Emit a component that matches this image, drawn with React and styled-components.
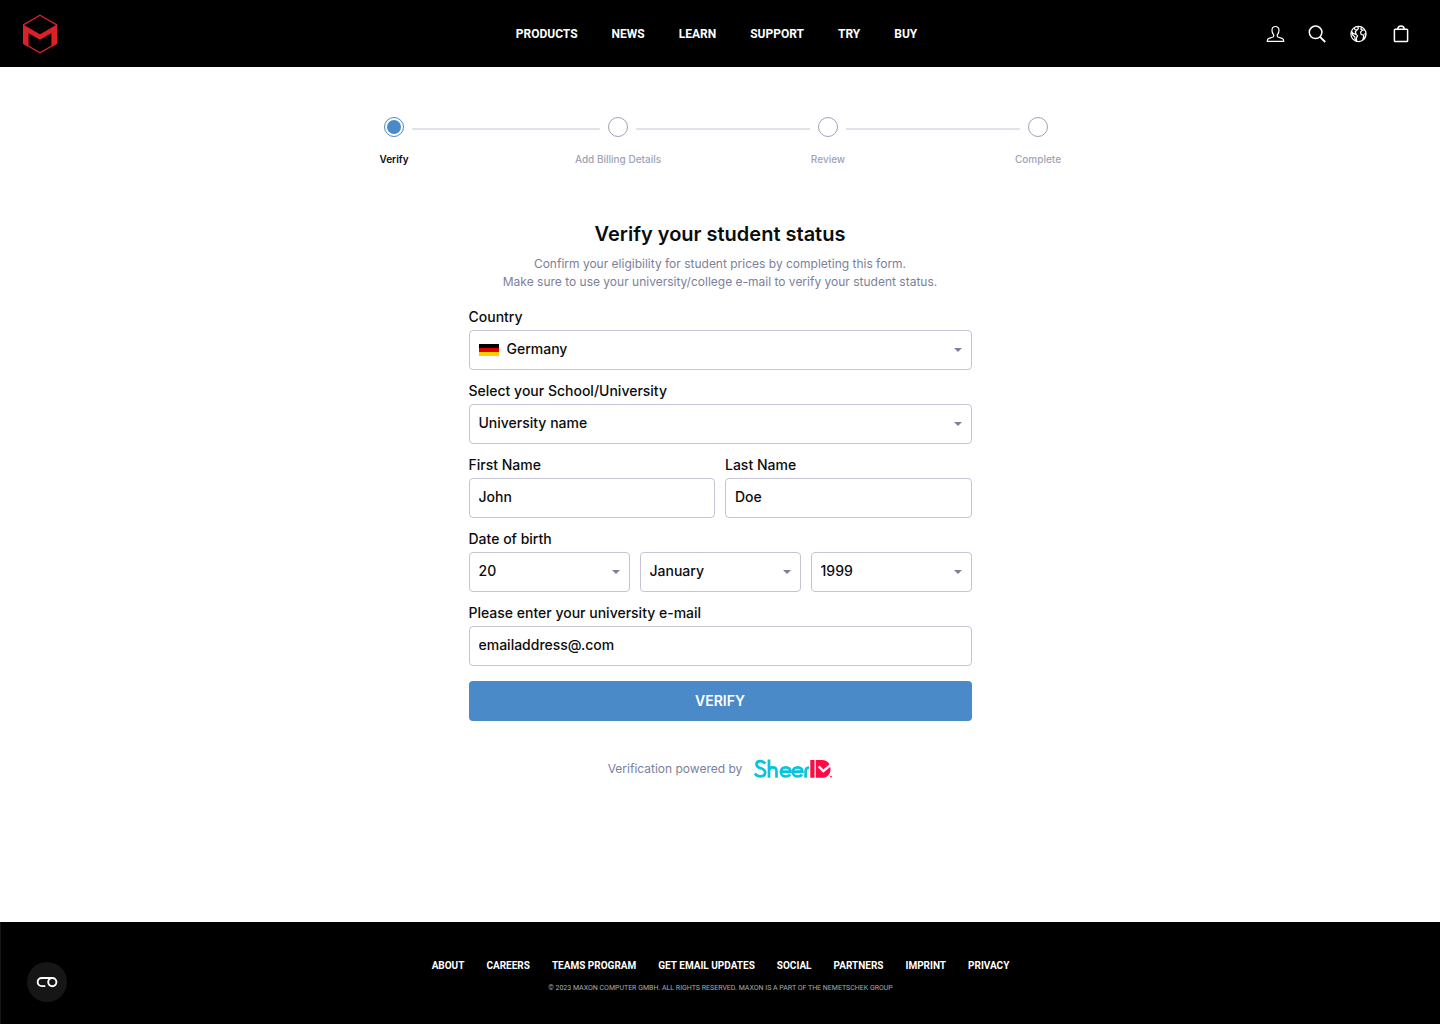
import React from "react"
import styled, { ThemeProvider, createGlobalStyle } from "styled-components"

const theme = {
  colors: {
    text: "#0b0d0d",
    muted: "#7c819a",
    step: "#9ea3b8",
    line: "#e1e1e9",
    border: "#c4c4d4",
    primary: "#4a8ac9",
    brand: "#da2128",
  },
  fonts: {
    body: `Inter, "Open Sans", sans-serif`,
    nav: `Roboto, "Liberation Sans", sans-serif`,
  },
}

const GlobalStyle = createGlobalStyle`
  * {
    box-sizing: border-box;
  }

  body {
    margin: 0;
    background: #fff;
    color: ${theme.colors.text};
    font-family: ${theme.fonts.body};
    font-size: 14px;
  }
`

const Page = styled.div`
  display: flex;
  flex-direction: column;
  min-height: 100vh;
`

const Header = styled.header`
  display: grid;
  grid-template-columns: 1fr auto 1fr;
  align-items: center;
  padding: 14px 29px 13px 22px;
  background: #000;
`

const LogoLink = styled.a`
  display: flex;
  justify-self: start;
`

const Nav = styled.nav`
  display: flex;
  flex-wrap: wrap;
  justify-content: center;
  gap: ${(props) => (props.$small ? "4px 22px" : "4px 34px")};
`

const NavLink = styled.a`
  color: #fff;
  font-family: ${(props) => props.theme.fonts.nav};
  font-size: ${(props) => (props.$small ? "10px" : "12px")};
  line-height: 16px;
  font-weight: 700;
  text-decoration: none;
  text-transform: uppercase;
`

const Tools = styled.div`
  display: flex;
  justify-self: end;
  align-items: center;
  gap: 22px;
`

const IconButton = styled.button`
  display: flex;
  padding: 0;
  border: 0;
  background: none;
  color: #fff;
  cursor: pointer;
`

const Main = styled.main`
  flex: 1;
  display: flex;
  flex-direction: column;
  align-items: center;
  padding: 50px 24px;
`

const Steps = styled.ol`
  display: flex;
  width: 100%;
  max-width: 682px;
  margin: 0 0 54px;
  padding: 0 13px 0 5px;
  list-style: none;
`

const Step = styled.li`
  display: flex;
  flex: ${(props) => props.$grow} 1 20px;
`

const StepMark = styled.div`
  display: flex;
  flex-direction: column;
  align-items: center;
  width: 20px;
  gap: 14px;
`

const StepCircle = styled.span`
  flex: none;
  width: 20px;
  height: 20px;
  padding: 2px;
  border: 1px solid
    ${(props) =>
      props.$active ? props.theme.colors.primary : props.theme.colors.step};
  border-radius: 50%;
  background: ${(props) =>
      props.$active ? props.theme.colors.primary : "transparent"}
    content-box;
`

const StepLabel = styled.span`
  color: ${(props) =>
    props.$active ? props.theme.colors.text : props.theme.colors.step};
  font-size: 10px;
  line-height: 16px;
  font-weight: ${(props) => (props.$active ? 600 : 500)};
  white-space: nowrap;
`

const StepLine = styled.span`
  flex: 1;
  height: 2px;
  margin: 11px 8px 0;
  border-radius: 1px;
  background: ${(props) => props.theme.colors.line};
`

const Title = styled.h1`
  margin: 0 0 8px;
  font-size: 20px;
  line-height: 26px;
  font-weight: 600;
`

const Intro = styled.p`
  margin: 0 0 13px;
  color: ${(props) => props.theme.colors.muted};
  font-size: 12px;
  line-height: 18px;
  text-align: center;
`

const Form = styled.form`
  display: flex;
  flex-direction: column;
  gap: 8px;
  width: 100%;
  max-width: 503px;
`

const Row = styled.div`
  display: grid;
  grid-template-columns: repeat(${(props) => props.$columns}, 1fr);
  gap: 10px;
`

const Field = styled.div`
  display: flex;
  flex-direction: column;
`

const FieldGroup = styled.fieldset`
  min-width: 0;
  margin: 0;
  padding: 0;
  border: 0;
`

const Label = styled.label`
  display: block;
  padding: 0;
  font-size: 14px;
  line-height: 26px;
  font-weight: 500;
`

const Input = styled.input`
  width: 100%;
  height: 40px;
  padding: 0 9px 3px;
  border: 1px solid ${(props) => props.theme.colors.border};
  border-radius: 4px;
  background: #fff;
  color: inherit;
  font-family: inherit;
  font-size: 14px;
  font-weight: 500;
`

const SelectBox = styled.div`
  display: grid;
  align-items: center;

  > * {
    grid-area: 1 / 1;
  }
`

const StyledSelect = styled(Input)`
  appearance: none;
  padding-left: ${(props) => (props.$hasFlag ? "37px" : "9px")};
`

const Caret = styled.svg`
  justify-self: end;
  margin-right: 10px;
  fill: ${(props) => props.theme.colors.muted};
  pointer-events: none;
`

const Flag = styled.svg`
  margin-left: 10px;
  pointer-events: none;
  z-index: 1;
`

const SubmitButton = styled.button`
  height: 40px;
  margin-top: 7px;
  padding: 0 0 2px;
  border: 0;
  border-radius: 4px;
  background: ${(props) => props.theme.colors.primary};
  color: #fff;
  font-family: inherit;
  font-size: 14px;
  font-weight: 600;
  text-transform: uppercase;
  cursor: pointer;
`

const PoweredBy = styled.div`
  display: flex;
  align-items: center;
  gap: 12px;
  margin-top: 38px;
  color: ${(props) => props.theme.colors.muted};
  font-size: 12px;
  line-height: 20px;
`

const Footer = styled.footer`
  display: flex;
  flex-direction: column;
  align-items: center;
  gap: 8px;
  padding: 36px 24px 30px;
  border-left: 1px solid #151515;
  background: #000;
`

const Copyright = styled.p`
  margin: 0;
  color: #a6abb2;
  font-family: ${(props) => props.theme.fonts.nav};
  font-size: 7px;
  line-height: 12px;
  text-transform: uppercase;
`

const CookieButton = styled.button`
  position: fixed;
  bottom: 22px;
  left: 27px;
  display: flex;
  align-items: center;
  justify-content: center;
  width: 40px;
  height: 40px;
  padding: 0;
  border: 0;
  border-radius: 50%;
  background: #161616;
  cursor: pointer;
`

const Logo = () => (
  <svg width="36" height="40" viewBox="0 0 36 40" fill="none">
    <path
      d="M18 1.2 34.4 10.6v18.8L18 38.8 1.6 29.4V10.6Z"
      stroke={theme.colors.brand}
      strokeWidth="1.3"
    />
    <path
      d="M1 10.4 18 20.2l17-9.8v19.3l-5.6 3.2V19.2L18 25.8 6.6 19.2v13.7L1 29.7Z"
      fill={theme.colors.brand}
    />
  </svg>
)

const UserIcon = () => (
  <svg width="20" height="20" viewBox="0 0 20 20" fill="none">
    <path
      d="M10.500 2.500C8.200 2.500 7 4.100 7 6.200c0 1.900.6 3.300 1.500 4.500.5.700.3 1.900-.5 2.300l-4 1.400c-1.300.5-1.800 1.400-1.800 2.900h16.600c0-1.500-.5-2.400-1.800-2.900l-4-1.400c-.8-.4-1-1.600-.5-2.300.9-1.200 1.500-2.600 1.500-4.500 0-2.100-1.200-3.700-3.500-3.700Z"
      stroke="currentColor"
      strokeWidth="1.2"
      strokeLinejoin="round"
    />
  </svg>
)

const SearchIcon = () => (
  <svg width="20" height="20" viewBox="0 0 20 20" fill="none">
    <g stroke="currentColor" strokeWidth="1.5">
      <circle cx="8.6" cy="8.3" r="6.3" />
      <path d="m13 12.8 5.2 5.2" strokeWidth="1.8" />
    </g>
  </svg>
)

const GlobeIcon = () => (
  <svg width="20" height="20" viewBox="0 0 20 20" fill="none">
    <g stroke="currentColor" strokeWidth="1.2" strokeLinejoin="round">
      <circle cx="9.5" cy="10" r="7.6" />
      <path d="M2.600 7.400 4 9.400l3.200 1 1.400 1.500-1.200 2 .2 3.600-1.600-2.300-.2-2.400-2-1.500-1.200-2.700M5.200 4l.9 1.700 2 .2 1.300-1.400-.6-1.900M8.200 5.900 6.300 7.700l.9 2.700" />
      <path d="m16 6-2.600.2-1.900 2 .7 2.300 2.100.4.3 2-.8 2.800 2-1.700.6-2.200-.4-2 .9-.6M12.700 3.200l-.9 1.900 1.600 1.100" />
    </g>
  </svg>
)

const BagIcon = () => (
  <svg width="20" height="20" viewBox="0 0 20 20" fill="none">
    <g stroke="currentColor" strokeWidth="1.5" strokeLinejoin="round">
      <rect x="3.4" y="5.3" width="13.2" height="12.2" rx="0.8" />
      <path d="M6.700 5.200C6.800 3 8 1.900 10 1.900s3.200 1.100 3.300 3.300" />
    </g>
  </svg>
)

const CookieIcon = () => (
  <svg width="22" height="12" viewBox="0 0 22 12" fill="none">
    <g stroke="#fff" strokeWidth="1.9">
      <path d="M16 2H5.700a4 4 0 0 0 0 8.100h3.600" />
      <circle cx="16.3" cy="6.1" r="4.1" />
    </g>
  </svg>
)

const SheerIdLogo = () => (
  <svg
    width="78"
    height="20"
    viewBox="0 0 78 20"
    fill="none"
    role="img"
    aria-label="SheerID"
  >
    <g stroke="#08c4dc" strokeWidth="2.7">
      <path d="M11.2 4.6C10 2.9 8.4 2.100 6.500 2.100c-2.500 0-4 1.300-4 3.300 0 4.900 8.700 2.700 8.700 7.900 0 2.500-1.900 4-4.700 4-2.300 0-4.200-.9-5.600-2.900" />
      <path d="M15 .5v18.200M15 12.300c0-2.500 1.500-4 3.800-4s3.700 1.500 3.700 4v6.400" />
      <path d="M26.700 12.700h9.800c0-2.700-2-4.400-4.700-4.400-2.900 0-4.900 1.900-4.900 4.600s2 4.600 5 4.600c1.800 0 3.300-.7 4.200-2.100" />
      <path d="M38.600 12.700h9.800c0-2.700-2-4.400-4.700-4.400-2.900 0-4.900 1.900-4.900 4.600s2 4.600 5 4.600c1.800 0 3.300-.7 4.200-2.100" />
      <path d="M51.600 18.700v-6.200c0-2.600 1.200-4 3.600-4" />
    </g>
    <path
      fill="#ff0a45"
      d="M56.300 1h4.200v17.700h-4.200zM61.800 1h6c5.300 0 8.700 3.600 8.700 8.900s-3.400 8.800-8.700 8.800h-6Z"
    />
    <path
      stroke="#fff"
      strokeWidth="2.4"
      d="m64.700 7.300 4.600 4.700 8-6.600"
    />
    <circle cx="77" cy="17.6" r="0.9" fill="#ff0a45" />
  </svg>
)

const navItems = ["Products", "News", "Learn", "Support", "Try", "Buy"]

const footerItems = [
  "About",
  "Careers",
  "Teams Program",
  "Get Email Updates",
  "Social",
  "Partners",
  "Imprint",
  "Privacy",
]

// grow keeps the first stretch slightly longer than the others
const steps = [
  { label: "Verify", grow: 204, active: true },
  { label: "Add Billing Details", grow: 190 },
  { label: "Review", grow: 190 },
  { label: "Complete", grow: 0 },
]

const tools = [
  { label: "Account", icon: UserIcon },
  { label: "Search", icon: SearchIcon },
  { label: "Language", icon: GlobeIcon },
  { label: "Cart", icon: BagIcon },
]

const Select = ({ id, value, label, flag }) => (
  <SelectBox>
    <StyledSelect
      as="select"
      id={id}
      aria-label={label}
      defaultValue={value}
      $hasFlag={!!flag}
    >
      <option>{value}</option>
    </StyledSelect>
    {flag}
    <Caret width="8" height="4" viewBox="0 0 8 4">
      <path d="M0 0h8L4 4Z" />
    </Caret>
  </SelectBox>
)

const GermanFlag = () => (
  <Flag width="20" height="12" viewBox="0 0 20 12">
    <path fill="#000" d="M0 0h20v4H0z" />
    <path fill="#d00" d="M0 4h20v4H0z" />
    <path fill="#ffce00" d="M0 8h20v4H0z" />
  </Flag>
)

const VerifyForm = () => (
  <Form onSubmit={(e) => e.preventDefault()}>
    <Field>
      <Label htmlFor="country">Country</Label>
      <Select id="country" value="Germany" flag={<GermanFlag />} />
    </Field>
    <Field>
      <Label htmlFor="school">Select your School/University</Label>
      <Select id="school" value="University name" />
    </Field>
    <Row $columns={2}>
      <Field>
        <Label htmlFor="first-name">First Name</Label>
        <Input id="first-name" defaultValue="John" />
      </Field>
      <Field>
        <Label htmlFor="last-name">Last Name</Label>
        <Input id="last-name" defaultValue="Doe" />
      </Field>
    </Row>
    <FieldGroup>
      <Label as="legend">Date of birth</Label>
      <Row $columns={3}>
        <Select id="day" label="Day" value="20" />
        <Select id="month" label="Month" value="January" />
        <Select id="year" label="Year" value="1999" />
      </Row>
    </FieldGroup>
    <Field>
      <Label htmlFor="email">Please enter your university e-mail</Label>
      <Input id="email" defaultValue="emailaddress@.com" />
    </Field>
    <SubmitButton type="submit">Verify</SubmitButton>
  </Form>
)

const App = () => (
  <ThemeProvider theme={theme}>
    <GlobalStyle />
    <Page>
      <Header>
        <LogoLink href="#" aria-label="Maxon">
          <Logo />
        </LogoLink>
        <Nav>
          {navItems.map((item) => (
            <NavLink key={item} href="#">
              {item}
            </NavLink>
          ))}
        </Nav>
        <Tools>
          {tools.map(({ label, icon: Icon }) => (
            <IconButton key={label} type="button" aria-label={label}>
              <Icon />
            </IconButton>
          ))}
        </Tools>
      </Header>
      <Main>
        <Steps>
          {steps.map(({ label, grow, active }, index) => (
            <Step key={label} $grow={grow}>
              <StepMark>
                <StepCircle $active={active} />
                <StepLabel $active={active}>{label}</StepLabel>
              </StepMark>
              {index < steps.length - 1 && <StepLine />}
            </Step>
          ))}
        </Steps>
        <Title>Verify your student status</Title>
        <Intro>
          Confirm your eligibility for student prices by completing this form.
          <br />
          Make sure to use your university/college e-mail to verify your student
          status.
        </Intro>
        <VerifyForm />
        <PoweredBy>
          Verification powered by
          <SheerIdLogo />
        </PoweredBy>
      </Main>
      <Footer>
        <Nav $small>
          {footerItems.map((item) => (
            <NavLink key={item} href="#" $small>
              {item}
            </NavLink>
          ))}
        </Nav>
        <Copyright>
          © 2023 Maxon Computer GmbH. All rights reserved. Maxon is a part of
          the Nemetschek Group
        </Copyright>
      </Footer>
      <CookieButton type="button" aria-label="Cookie settings">
        <CookieIcon />
      </CookieButton>
    </Page>
  </ThemeProvider>
)

export default App
